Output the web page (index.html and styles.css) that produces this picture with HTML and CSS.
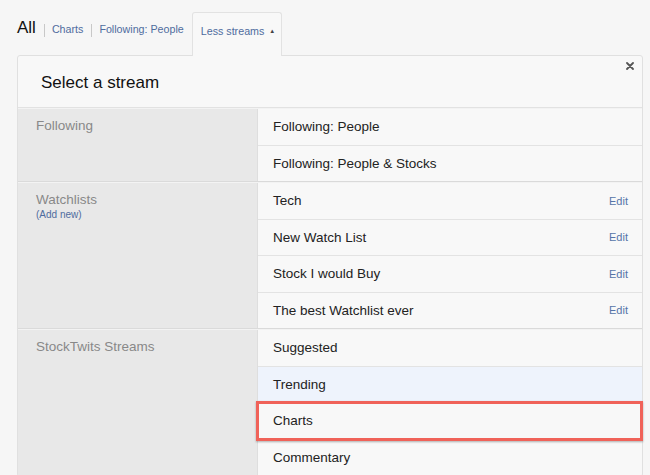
FILE: index.html
```html
<!DOCTYPE html>
<html lang="en">
<head>
    <meta charset="UTF-8">
    <title>Select a stream</title>
    <link rel="stylesheet" href="styles.css">
</head>
<body>
    <div class="nav">
        <span class="all">All</span>
        <span class="sep"></span>
        <a class="link">Charts</a>
        <span class="sep"></span>
        <a class="link">Following: People</a>
        <div class="tab">Less streams <span class="caret">&#9650;</span></div>
    </div>

    <div class="panel">
        <div class="head">
            <h2>Select a stream</h2>
            <svg class="close" width="8" height="8" viewBox="0 0 8 8"><path d="M1 1L7 7M7 1L1 7" stroke="#555" stroke-width="1.8" stroke-linecap="round"/></svg>
        </div>

        <div class="group">
            <div class="label">Following</div>
            <div class="items">
                <div class="row">Following: People</div>
                <div class="row">Following: People &amp; Stocks</div>
            </div>
        </div>

        <div class="group">
            <div class="label">Watchlists<a class="add">(Add new)</a></div>
            <div class="items">
                <div class="row">Tech <a class="edit">Edit</a></div>
                <div class="row">New Watch List <a class="edit">Edit</a></div>
                <div class="row">Stock I would Buy <a class="edit">Edit</a></div>
                <div class="row">The best Watchlist ever <a class="edit">Edit</a></div>
            </div>
        </div>

        <div class="group">
            <div class="label">StockTwits Streams</div>
            <div class="items">
                <div class="row">Suggested</div>
                <div class="row hover">Trending</div>
                <div class="row picked">Charts</div>
                <div class="row">Commentary</div>
            </div>
        </div>
    </div>
</body>
</html>
```

FILE: styles.css
```css
body {
    margin: 0;
    background: #f6f6f6;
    font-family: "Liberation Sans", Arial, sans-serif;
    color: #222;
    height: 475px;
    overflow: hidden;
}
a { color: #4f6c9e; cursor: pointer; }

.nav { display: flex; align-items: flex-start; height: 43px; padding: 12px 0 0 17px; }
.all { font-size: 17px; line-height: 20px; padding-top: 6px; color: #111; }
.sep { width: 0; height: 13px; border-left: 1px solid #c8c8c8; margin: 12px 7px 0 8px; }
.link { font-size: 10.7px; line-height: 14px; padding-top: 10px; }
.tab {
    margin: 0 0 -1px 8px;
    height: 44px;
    padding: 11px 6px 0 8px;
    box-sizing: border-box;
    border: 1px solid #e2e2e2;
    border-bottom: none;
    border-radius: 3px 3px 0 0;
    background: #f8f8f8;
    font-size: 10.7px;
    line-height: 14px;
    color: #4f6c9e;
    white-space: nowrap;
    position: relative;
    z-index: 1;
}
.caret { font-size: 6px; vertical-align: 2px; margin-left: 2px; color: #444; }

.panel {
    margin-left: 17px;
    width: 626px;
    box-sizing: border-box;
    border: 1px solid #e0e0e0;
    border-radius: 3px;
    background: #f8f8f8;
}
.head {
    display: flex;
    justify-content: space-between;
    align-items: center;
    height: 52px;
    box-sizing: border-box;
    padding: 3px 8px 0 23px;
    border-bottom: 1px solid #e2e2e2;
}
.head h2 { margin: 0; font-size: 17px; font-weight: normal; color: #111; }
.close { align-self: flex-start; margin-top: 3px; }

.group { display: flex; border-bottom: 1px solid #dadada; border-top: 1px solid #f3f3f3; }
.group:first-of-type { border-top: none; }
.label {
    width: 240px;
    flex-shrink: 0;
    background: #e8e8e8;
    border-right: 1px solid #dedede;
    padding: 9px 18px;
    box-sizing: border-box;
    font-size: 13.5px;
    color: #888;
}
.add { display: block; font-size: 10px; line-height: 12px; margin-top: 2px; }
.items { flex: 1; }
.row {
    display: flex;
    justify-content: space-between;
    align-items: center;
    height: 35.5px;
    padding: 0 14px 0 15px;
    border-bottom: 1px solid #e3e3e3;
    font-size: 13.5px;
}
.row:last-child { border-bottom: none; }
.edit { font-size: 11px; color: #5574a8; }
.hover { background: #eef3fc; }
.picked { position: relative; }
.picked::after {
    content: "";
    position: absolute;
    top: -2px;
    bottom: -2px;
    left: -2px;
    right: -1px;
    border: 3px solid #f06259;
    box-shadow: 0 1px 2px rgba(0,0,0,.3);
}
```
